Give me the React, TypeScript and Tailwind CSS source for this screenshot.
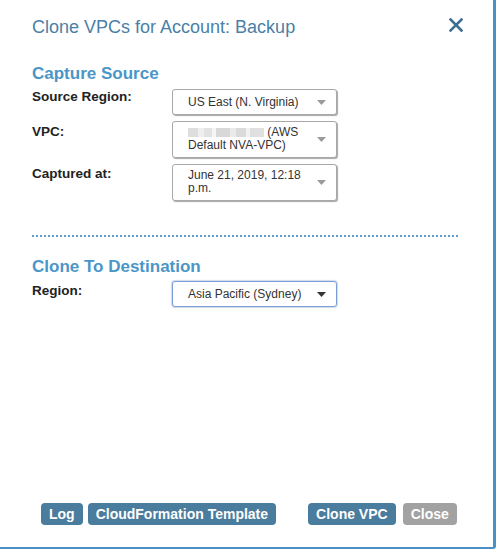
const font = { fontFamily: '"Liberation Sans", Arial, sans-serif' };

const Arrow = ({ dark }: { dark?: boolean }) => (
  <svg width="9" height="5" viewBox="0 0 9 5" className="shrink-0">
    <path d="M0 0 L9 0 L4.5 5 Z" fill={dark ? "#333333" : "#9a9a9a"} />
  </svg>
);

const Select = ({
  children,
  focused,
  tall,
}: {
  children: React.ReactNode;
  focused?: boolean;
  tall?: boolean;
}) => (
  <div
    className={`w-[165px] flex items-center justify-between pl-[15px] pr-[10px] rounded-[3px] border bg-white text-[12px] font-normal text-[#333] ${
      tall ? "pt-[4px] pb-[5px] leading-[13px]" : "py-[5px] leading-[14px]"
    } ${
      focused
        ? "border-[#7d9fd6] shadow-[0_0_1px_1px_rgba(120,150,210,0.35)]"
        : "border-[#a8a8a8] shadow-[1px_1px_1px_rgba(0,0,0,0.35)]"
    }`}
  >
    <div className="w-[124px]">{children}</div>
    <Arrow dark={focused} />
  </div>
);

const Blur = () => (
  <span className="inline-flex align-[-1px] h-[9px] w-[76px] opacity-80">
    <span className="w-[10px] bg-[#d6d6d6]" />
    <span className="w-[6px] bg-[#ececec]" />
    <span className="w-[8px] bg-[#dcdcdc]" />
    <span className="w-[4px] bg-[#f3f3f3]" />
    <span className="w-[14px] bg-[#cfcfcf]" />
    <span className="w-[6px] bg-[#e6e6e6]" />
    <span className="w-[10px] bg-[#d2d2d2]" />
    <span className="w-[4px] bg-[#efefef]" />
    <span className="w-[14px] bg-[#d8d8d8]" />
  </span>
);

export default function App() {
  return (
    <div
      style={font}
      className="w-[496px] h-[549px] bg-white border-r-[3px] border-b-2 border-[#4a90c4] rounded-br-[3px] flex flex-col"
    >
      {/* header */}
      <div className="flex justify-between items-start pt-[15px] pl-[32px] pr-[30px]">
        <h1 className="text-[18px] leading-6 text-[#4a7fa6]">Clone VPCs for Account: Backup</h1>
        <svg width="14" height="14" viewBox="0 0 14 14" className="mt-[3px]">
          <path d="M1.5 1.5 L12.5 12.5 M12.5 1.5 L1.5 12.5" stroke="#3e6f93" strokeWidth="2.6" strokeLinecap="square" />
        </svg>
      </div>

      <div className="px-[32px]">
        <h2 className="mt-[25px] text-[17px] leading-[20px] font-bold text-[#4a96c8]">Capture Source</h2>

        <div className="mt-[5px] grid grid-cols-[140px_165px] gap-y-[6px] text-[13.5px] leading-4 font-bold text-[#222]">
          <div>Source Region:</div>
          <Select>US East (N. Virginia)</Select>

          <div className="pt-[3px]">VPC:</div>
          <Select tall>
            <Blur /> (AWS Default NVA-VPC)
          </Select>

          <div className="pt-[2px]">Captured at:</div>
          <Select tall>June 21, 2019, 12:18 p.m.</Select>
        </div>

        <div className="mt-[34px] w-[426px] border-t-2 border-dotted border-[#5a9dcc]" />

        <h2 className="mt-[20px] text-[17px] leading-[20px] font-bold text-[#4a96c8]">Clone To Destination</h2>

        <div className="mt-[4px] grid grid-cols-[140px_165px] text-[13.5px] leading-4 font-bold text-[#222]">
          <div className="pt-[2px]">Region:</div>
          <Select focused>Asia Pacific (Sydney)</Select>
        </div>
      </div>

      {/* footer buttons */}
      <div className="mt-auto pb-[22px] pl-[41px] flex text-[14px] font-bold text-white">
        <button className="h-[22px] px-2 rounded-[4px] bg-[#4a7c9d] leading-[22px]">Log</button>
        <button className="ml-[5px] h-[22px] px-2 rounded-[4px] bg-[#4a7c9d] leading-[22px]">CloudFormation Template</button>
        <button className="ml-[32px] h-[22px] px-2 rounded-[4px] bg-[#4a7c9d] leading-[22px]">Clone VPC</button>
        <button className="ml-[7px] h-[22px] px-2 rounded-[4px] bg-[#a2a2a2] leading-[22px]">Close</button>
      </div>
    </div>
  );
}
